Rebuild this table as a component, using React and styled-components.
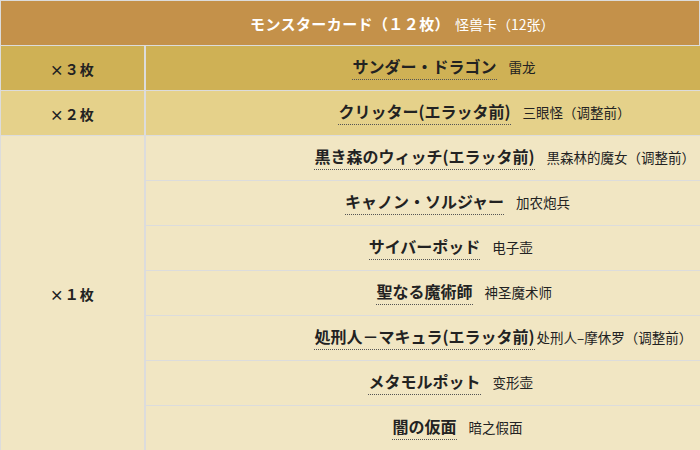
import React from 'react';
import styled, { createGlobalStyle } from 'styled-components';

const GlobalStyle = createGlobalStyle`
  html, body {
    margin: 0;
    padding: 0;
    background: #ffffff;
  }
  body {
    font-family: "Noto Sans CJK JP", "Noto Sans", sans-serif;
    color: #222;
    overflow: hidden;
  }
`;

const tones = {
  dark: '#cfb155',
  mid: '#e5d18a',
  light: '#f1e6c3',
};

const cards = [
  { count: '×３枚', tone: 'dark', list: [{ ja: 'サンダー・ドラゴン', cn: '雷龙' }] },
  { count: '×２枚', tone: 'mid', list: [{ ja: 'クリッター(エラッタ前)', cn: '三眼怪（调整前）' }] },
  {
    count: '×１枚',
    tone: 'light',
    list: [
      { ja: '黒き森のウィッチ(エラッタ前)', cn: '黒森林的魔女（调整前）' },
      { ja: 'キャノン・ソルジャー', cn: '加农炮兵' },
      { ja: 'サイバーポッド', cn: '电子壶' },
      { ja: '聖なる魔術師', cn: '神圣魔术师' },
      { ja: '処刑人－マキュラ(エラッタ前)', cn: '处刑人–摩休罗（调整前）', tight: true },
      { ja: 'メタモルポット', cn: '变形壶' },
      { ja: '闇の仮面', cn: '暗之假面' },
    ],
  },
];

const App = () => {
  return (
    <>
      <GlobalStyle />
      <Table>
        <colgroup>
          <CountCol />
          <col />
        </colgroup>
        <tbody>
          <tr>
            <HeaderCell colSpan={2}>
              <Line>
                <HeadJa>モンスターカード（１２枚）</HeadJa>
                <HeadCn>怪兽卡（12张）</HeadCn>
              </Line>
            </HeaderCell>
          </tr>
          {cards.map((group) =>
            group.list.map((card, i) => (
              <tr key={card.ja}>
                {i === 0 && (
                  <CountCell tone={group.tone} rowSpan={group.list.length}>
                    <CountText>{group.count}</CountText>
                  </CountCell>
                )}
                <NameCell tone={group.tone}>
                  <Line>
                    <CardName>{card.ja}</CardName>
                    <CnName $tight={card.tight}>{card.cn}</CnName>
                  </Line>
                </NameCell>
              </tr>
            ))
          )}
        </tbody>
      </Table>
    </>
  );
};

const Table = styled.table`
  width: 700px;
  border-collapse: collapse;
  table-layout: fixed;
`;

const CountCol = styled.col`
  width: 144px;
`;

const HeaderCell = styled.td`
  height: 44px;
  padding: 0;
  background: #c4914a;
  border: 1px solid #dcdcdc;
  color: #fff;
`;

const CountCell = styled.td`
  height: 44px;
  padding: 0;
  background: ${({ tone }) => tones[tone]};
  border: 1px solid #dcdcdc;
  border-right-width: 2px;
  text-align: center;
  vertical-align: middle;
`;

const CountText = styled.span`
  display: inline-block;
  margin-top: -2px;
  font-size: 14px;
  font-weight: 700;
  letter-spacing: 1px;
`;

const NameCell = styled.td`
  height: 44px;
  padding: 0 0 0 4px;
  background: ${({ tone }) => tones[tone]};
  border: 1px solid #dcdcdc;
  border-right: none;
  overflow: visible;
`;

const Line = styled.div`
  display: grid;
  grid-template-columns: 1fr auto 1fr;
  align-items: baseline;
  white-space: nowrap;
`;

const HeadJa = styled.span`
  grid-column: 2;
  font-size: 15px;
  font-weight: 700;
  letter-spacing: 0.4px;
`;

const HeadCn = styled.span`
  grid-column: 3;
  justify-self: start;
  margin-left: 5px;
  font-family: "Noto Sans CJK SC", sans-serif;
  font-size: 14px;
  font-weight: 400;
`;

const CardName = styled.span`
  grid-column: 2;
  font-size: 16px;
  font-weight: 700;
  line-height: 20px;
  color: #222;
  padding-bottom: 3px;
  border-bottom: 1px dotted #555;
`;

const CnName = styled.span`
  grid-column: 3;
  justify-self: start;
  margin-left: ${({ $tight }) => ($tight ? '2px' : '12px')};
  font-family: "Noto Sans CJK SC", sans-serif;
  font-size: 13.5px;
  font-weight: 400;
  color: #222;
`;

export default App;
